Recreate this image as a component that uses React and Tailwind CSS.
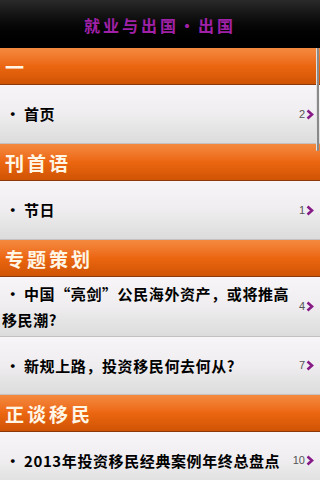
import { useState } from "react";

const sections = [
  { title: "一", items: [{ text: "首页", count: 2, h: "h-[59px]" }] },
  { title: "刊首语", items: [{ text: "节日", count: 1, h: "h-[59px]" }] },
  {
    title: "专题策划",
    items: [
      { text: "中国“亮剑”公民海外资产，或将推高移民潮?", count: 4, h: "h-[60px]" },
      { text: "新规上路，投资移民何去何从?", count: 7, h: "h-[58px]" },
    ],
  },
  { title: "正谈移民", items: [{ text: "2013年投资移民经典案例年终总盘点", count: 10, h: "h-[58px]" }] },
];

function Header({ title }) {
  return (
    <div className="h-[37px] flex items-center px-[5px] bg-gradient-to-b from-[#f48a3e] via-[#ec6610] to-[#cf5404] border-b border-[#8c3a0c]">
      <span className="text-[19px] font-bold text-[#fff6e6] tracking-[3px] leading-none">{title}</span>
    </div>
  );
}

function Row({ item }) {
  return (
    <div className={`${item.h} flex items-center bg-gradient-to-b from-[#f7f5f7] via-[#efedef] to-[#dcdcdc] border-b border-[#c4c0c0]`}>
      <p className="flex-1 pl-[2px] text-[15px] font-bold text-black leading-[26px] tracking-[0.6px]">
        <span className="inline-block w-[22px] text-center">·</span>
        {item.text}
      </p>
      <div className="flex items-center pr-[6px] shrink-0 gap-[1px]">
        <span className="text-[11px] text-[#555] font-['Liberation_Sans',sans-serif] leading-none">{item.count}</span>
        <svg width="8" height="11" viewBox="0 0 8 11">
          <path d="M1.5 1.5 L6 5.5 L1.5 9.5" fill="none" stroke="#861a86" strokeWidth="2.6" strokeLinejoin="miter" />
        </svg>
      </div>
    </div>
  );
}

export default function App() {
  const [open] = useState(true);
  return (
    <div className="relative w-[320px] h-[480px] overflow-hidden bg-[#f2f0f2] font-['Noto_Sans_CJK_SC',sans-serif]">
      <div className="h-[48px] flex items-center justify-center bg-gradient-to-b from-[#2a2a2a] via-[#080808] to-black">
        <span className="text-[16px] font-bold text-[#a021a8] tracking-[3px] mt-[2px]">就业与出国·出国</span>
      </div>
      {open &&
        sections.map((s) => (
          <div key={s.title}>
            <Header title={s.title} />
            {s.items.map((it) => (
              <Row key={it.text} item={it} />
            ))}
          </div>
        ))}
      <div className="absolute right-[1px] top-[48px] w-[3px] h-[103px] bg-[#8a8a8a] border-l border-[#e0e0e0] rounded-[1px]" />
    </div>
  );
}
